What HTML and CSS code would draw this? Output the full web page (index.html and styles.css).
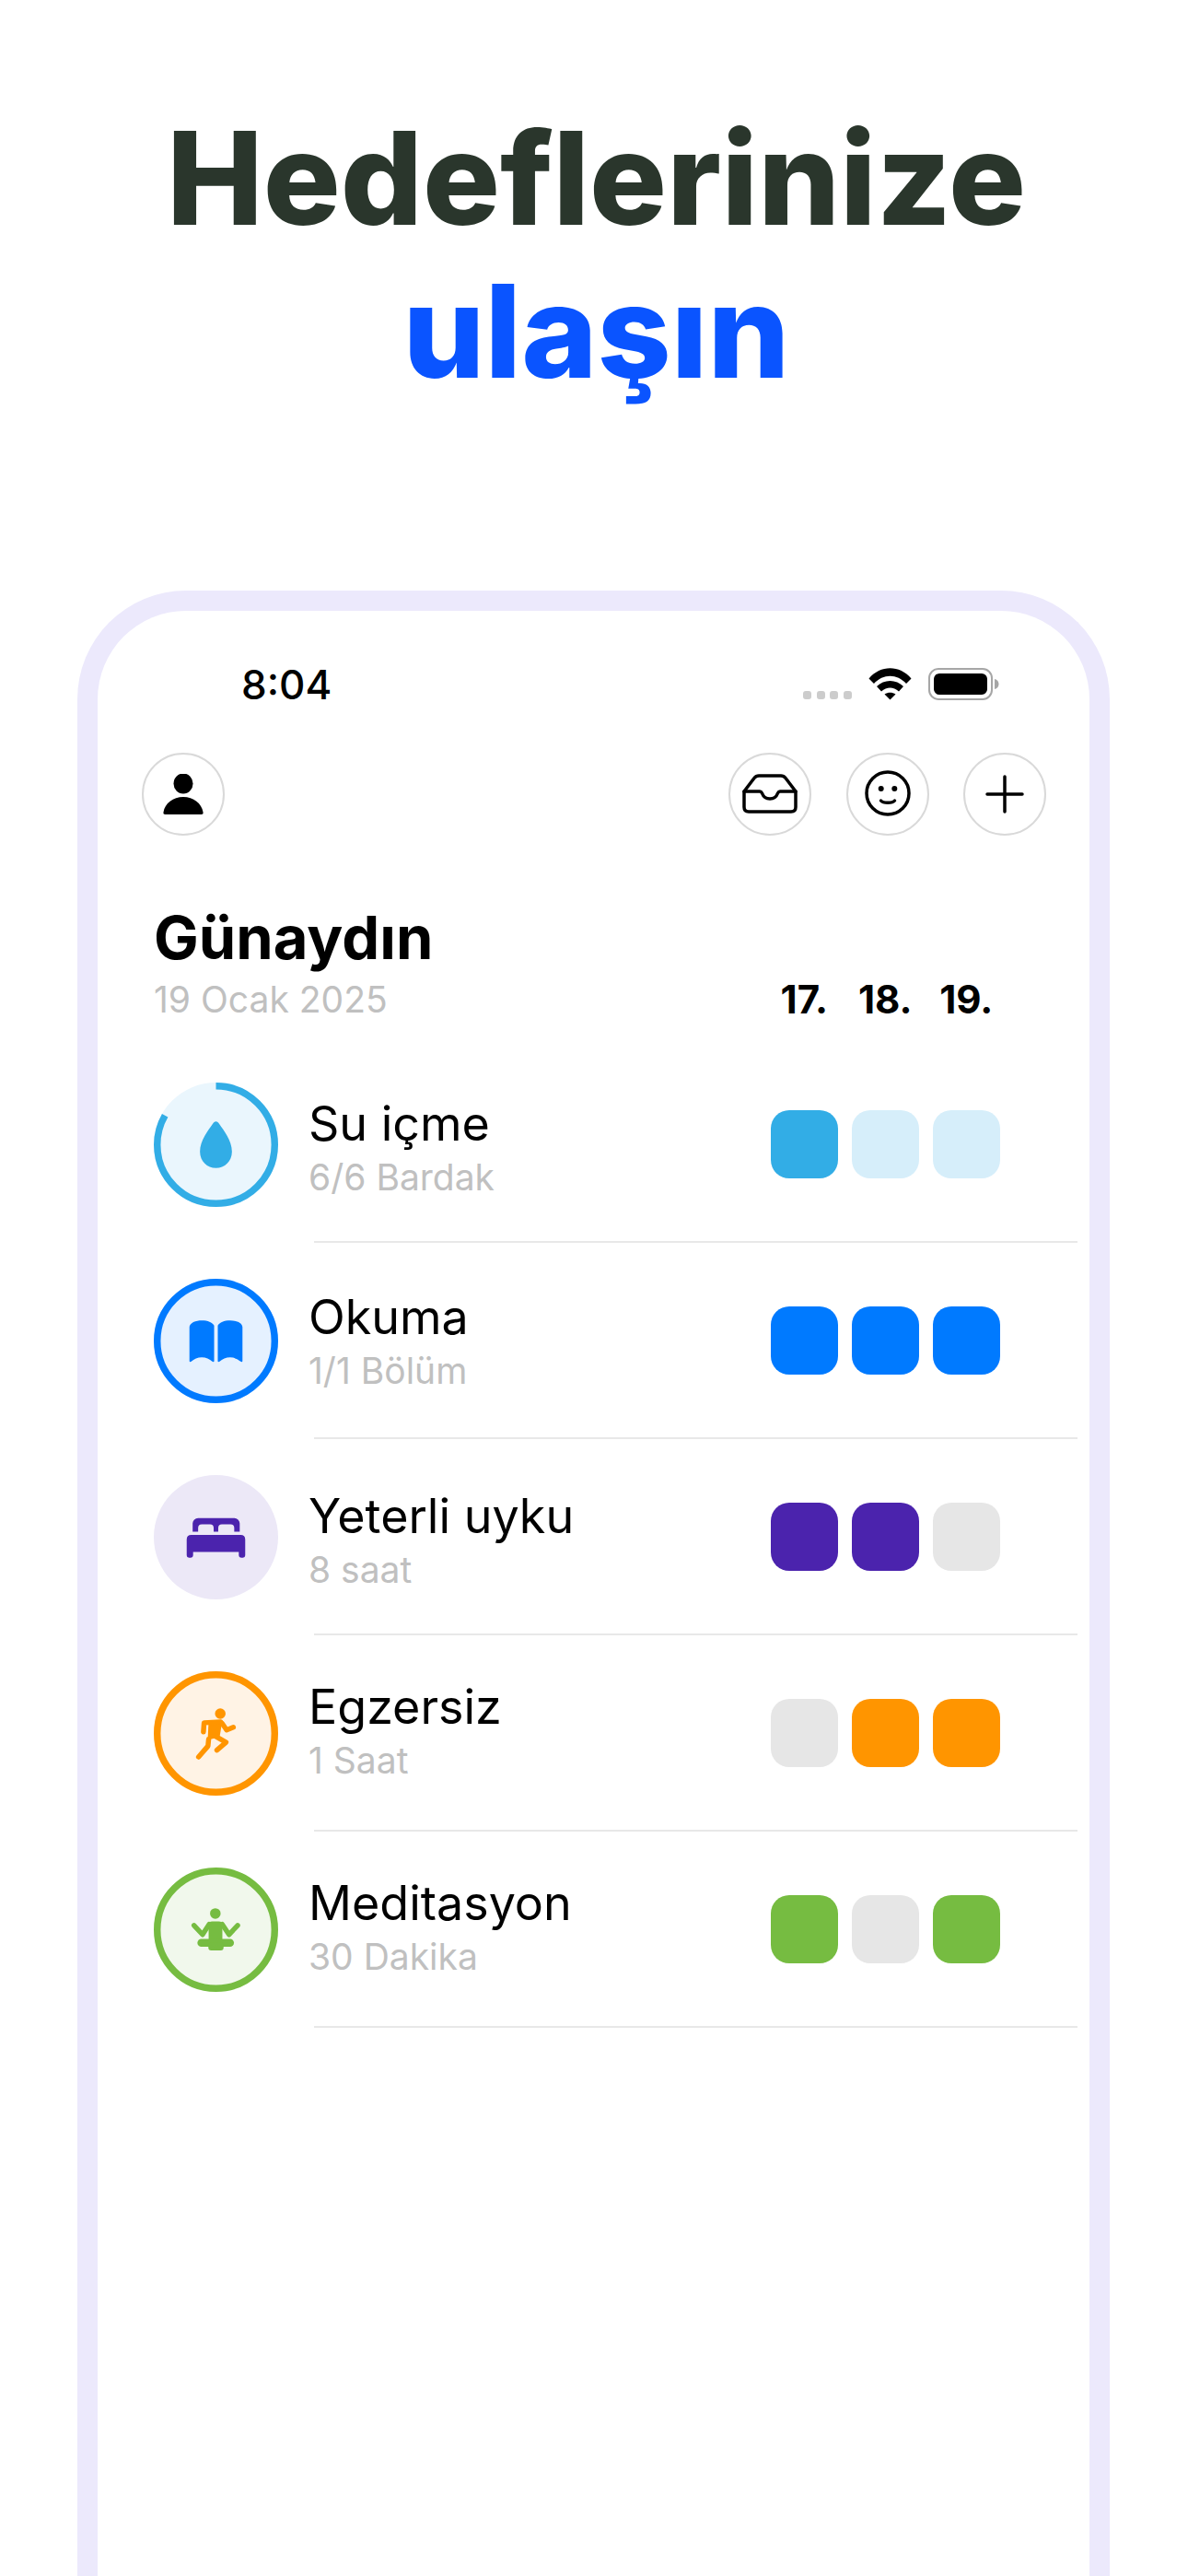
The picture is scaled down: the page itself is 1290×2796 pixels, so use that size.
FILE: index.html
```html
<!DOCTYPE html>
<html lang="tr">
<head>
    <meta charset="UTF-8">
    <meta name="viewport" content="width=device-width, initial-scale=1.0">
    <title>Hedeflerinize ulaşın</title>
    <link rel="stylesheet" href="styles.css">
</head>
<body>
    <div class="page">
        <h1 class="headline">Hedeflerinize<br><span class="headline-blue">ulaşın</span></h1>

        <div class="phone">
            <div class="status">
                <span class="time">8:04</span>
                <div class="status-icons">
                    <div class="dots"><i></i><i></i><i></i><i></i></div>
                    <svg class="wifi" width="47" height="35" viewBox="0 0 47 35">
                        <path d="M0.5 11.5C13 -3.5 34 -3.5 46.5 11.5L41 17C31 6 16 6 6 17Z"/>
                        <path d="M9 20C17 12 30 12 38 20L33 25.5C27 20 20 20 14 25.5Z"/>
                        <path d="M17.5 28.5C21 26 26 26 29.5 28.5L23.5 34.5Z"/>
                    </svg>
                    <svg class="battery" width="77" height="35" viewBox="0 0 77 35">
                        <rect x="1" y="1" width="68" height="33" rx="10" fill="none" stroke="#a6a6a6" stroke-width="2"/>
                        <rect x="6" y="6" width="58" height="23" rx="6" fill="#000"/>
                        <path d="M72 12C75 12.5 76.500 15 76.500 17.500C76.500 20 75 22.500 72 23Z" fill="#a6a6a6"/>
                    </svg>
                </div>
            </div>

            <div class="nav">
                <button class="nav-btn">
                    <svg width="44" height="44" viewBox="0 0 44 44">
                        <ellipse cx="22" cy="10.500" rx="10.500" ry="11"/>
                        <path d="M2.500 44H41.500Q44 44 43.500 41.500C42 32 33 25 22 25C11 25 2 32 0.500 41.500Q0 44 2.500 44Z"/>
                    </svg>
                </button>
                <div class="nav-right">
                    <button class="nav-btn">
                        <svg class="line-icon" width="60" height="44" viewBox="0 0 60 44">
                            <path d="M2 19L13 4.500Q15 2 18 2H42Q45 2 47 4.500L58 19V36Q58 41 53 41H7Q2 41 2 36Z"/>
                            <path d="M2 19H19C20.500 19 21 20 21.500 21C23 25 26 27 30 27C34 27 37 25 38.500 21C39 20 39.500 19 41 19H58"/>
                        </svg>
                    </button>
                    <button class="nav-btn">
                        <svg class="line-icon" width="52" height="52" viewBox="0 0 52 52">
                            <circle cx="26" cy="25" r="23"/>
                            <circle class="eye" cx="18.700" cy="20" r="3"/>
                            <circle class="eye" cx="33.300" cy="20" r="3"/>
                            <path d="M18.500 33C21 36 31 36 33.500 33"/>
                        </svg>
                    </button>
                    <button class="nav-btn">
                        <svg class="line-icon" width="42" height="42" viewBox="0 0 42 42">
                            <path d="M21 2V40M2 21H40"/>
                        </svg>
                    </button>
                </div>
            </div>

            <div class="greeting">
                <div>
                    <div class="hello">Günaydın</div>
                    <div class="date">19 Ocak 2025</div>
                </div>
                <div class="days">
                    <span>17.</span>
                    <span>18.</span>
                    <span>19.</span>
                </div>
            </div>

            <div class="habits">
                <div class="habit water">
                    <svg class="badge" width="135" height="135" viewBox="0 0 136 136">
                        <circle cx="68" cy="68" r="68" fill="#eaf6fd"/>
                        <circle class="ring" cx="68" cy="68" r="64.250" pathLength="100" stroke-dasharray="83.300 100" transform="rotate(-90 68 68)"/>
                        <path class="glyph" d="M68 42.500C69.500 42.500 70.500 43.500 71.500 45C76 51.500 85.500 63 85.500 75.500C85.500 86 77.500 93.500 68 93.500C58.500 93.500 50.500 86 50.500 75.500C50.500 63 60 51.500 64.500 45C65.500 43.500 66.500 42.500 68 42.500Z"/>
                    </svg>
                    <div class="habit-body">
                        <div class="habit-text">
                            <div class="habit-name">Su içme</div>
                            <div class="habit-sub">6/6 Bardak</div>
                        </div>
                        <div class="squares">
                            <span class="square on"></span>
                            <span class="square"></span>
                            <span class="square"></span>
                        </div>
                    </div>
                </div>

                <div class="habit reading">
                    <svg class="badge" width="135" height="135" viewBox="0 0 136 136">
                        <circle cx="68" cy="68" r="68" fill="#e5f1ff"/>
                        <circle class="ring" cx="68" cy="68" r="64.250"/>
                        <path class="glyph" d="M39 53C39 48 46 45.500 52.500 45.500C59 45.500 64 47.500 66 51V90C66 91 65 91 64 90.500C61 88 57 86 52.500 86C48 86 44 88 41 90.500C40 91 39 91 39 90Z"/>
                        <path class="glyph" d="M97 53C97 48 90 45.500 83.500 45.500C77 45.500 72 47.500 70 51V90C70 91 71 91 72 90.500C75 88 79 86 83.500 86C88 86 92 88 95 90.500C96 91 97 91 97 90Z"/>
                    </svg>
                    <div class="habit-body">
                        <div class="habit-text">
                            <div class="habit-name">Okuma</div>
                            <div class="habit-sub">1/1 Bölüm</div>
                        </div>
                        <div class="squares">
                            <span class="square on"></span>
                            <span class="square on"></span>
                            <span class="square on"></span>
                        </div>
                    </div>
                </div>

                <div class="habit sleep">
                    <svg class="badge" width="135" height="135" viewBox="0 0 136 136">
                        <circle cx="68" cy="68" r="68" fill="#ece8f7"/>
                        <path class="glyph" d="M42.500 53A6 6 0 0 1 48.500 47H88A6 6 0 0 1 94 53V62H88V58A4 4 0 0 0 84 54H74.500A4 4 0 0 0 70.500 58V62H65.500V58A4 4 0 0 0 61.500 54H52.500A4 4 0 0 0 48.500 58V62H42.500Z"/>
                        <path class="glyph" d="M41 65.500H95Q100 65.500 100 70.500V88Q100 90.500 97.500 90.500H95.500Q93 90.500 93 88V84H43V88Q43 90.500 40.500 90.500H38.500Q36 90.500 36 88V70.500Q36 65.500 41 65.500Z"/>
                    </svg>
                    <div class="habit-body">
                        <div class="habit-text">
                            <div class="habit-name">Yeterli uyku</div>
                            <div class="habit-sub">8 saat</div>
                        </div>
                        <div class="squares">
                            <span class="square on"></span>
                            <span class="square on"></span>
                            <span class="square"></span>
                        </div>
                    </div>
                </div>

                <div class="habit exercise">
                    <svg class="badge" width="135" height="135" viewBox="0 0 136 136">
                        <circle cx="68" cy="68" r="68" fill="#fff3e5"/>
                        <circle class="ring" cx="68" cy="68" r="64.250"/>
                        <circle class="glyph" cx="72.700" cy="46.300" r="5.800"/>
                        <path class="glyph" d="M60 54H75L72 72L59 75Z"/>
                        <path class="limb" d="M73 55.500L55 56.300L54.300 66.300"/>
                        <path class="limb" d="M74.700 57L79.700 64.300L87 61.300"/>
                        <path class="limb" d="M66.300 70.300L79 77.700L69 86.300"/>
                        <path class="limb" d="M60 74.300L59.300 81.700L49 93.700"/>
                    </svg>
                    <div class="habit-body">
                        <div class="habit-text">
                            <div class="habit-name">Egzersiz</div>
                            <div class="habit-sub">1 Saat</div>
                        </div>
                        <div class="squares">
                            <span class="square"></span>
                            <span class="square on"></span>
                            <span class="square on"></span>
                        </div>
                    </div>
                </div>

                <div class="habit meditation">
                    <svg class="badge" width="135" height="135" viewBox="0 0 136 136">
                        <circle cx="68" cy="68" r="68" fill="#f1f8ec"/>
                        <circle class="ring" cx="68" cy="68" r="64.250"/>
                        <circle class="glyph" cx="67.300" cy="50.300" r="5.800"/>
                        <path class="glyph" d="M64 59H71C74 59 75 61 75 63V82H60V63C60 61 61 59 64 59Z"/>
                        <path class="limb" d="M44 63.300L53.300 73.300L60.700 62"/>
                        <path class="limb" d="M91.700 63.300L82.300 73.300L74.700 62"/>
                        <rect class="glyph" x="47.700" y="78" width="40" height="8.700" rx="4.300"/>
                        <rect class="glyph" x="59.700" y="82" width="16.600" height="8.700" rx="3"/>
                    </svg>
                    <div class="habit-body">
                        <div class="habit-text">
                            <div class="habit-name">Meditasyon</div>
                            <div class="habit-sub">30 Dakika</div>
                        </div>
                        <div class="squares">
                            <span class="square on"></span>
                            <span class="square"></span>
                            <span class="square on"></span>
                        </div>
                    </div>
                </div>
            </div>
        </div>
    </div>
</body>
</html>
```

FILE: styles.css
```css
* {
    box-sizing: border-box;
}

body {
    margin: 0;
    background: #ffffff;
    font-family: Inter, "Liberation Sans", sans-serif;
    color: #000;
}

.page {
    display: flex;
    flex-direction: column;
    width: 1290px;
    height: 2796px;
    overflow: hidden;
}

.headline {
    margin: 0;
    padding: 110px 0 0 5px;
    text-align: center;
    font-size: 140px;
    line-height: 166px;
    font-weight: 800;
    color: #2a362c;
}

.headline-blue {
    color: #0a54ff;
}

.phone {
    flex: 1;
    margin: 199px 85px 0 84px;
    border: 22px solid #ece9fc;
    border-bottom: none;
    border-radius: 118px 118px 0 0;
}

/* status bar */
.status {
    display: flex;
    justify-content: space-between;
    align-items: flex-start;
    padding: 54px 98px 0 156px;
}

.time {
    font-size: 44px;
    line-height: 53px;
    font-weight: 500;
}

.status-icons {
    display: flex;
    align-items: flex-end;
    gap: 18px;
    margin-top: 8px;
}

.dots {
    display: flex;
    gap: 5.6px;
    margin-bottom: 1px;
}

.dots i {
    width: 9px;
    height: 9px;
    border-radius: 3px;
    background: #cccccc;
}

.status svg {
    display: block;
}

/* top buttons */
.nav {
    display: flex;
    justify-content: space-between;
    margin-top: 47px;
    padding: 0 47px 0 48px;
}

.nav-right {
    display: flex;
    gap: 37.500px;
}

.nav-btn {
    display: flex;
    align-items: center;
    justify-content: center;
    width: 90px;
    height: 90px;
    padding: 0;
    background: #fff;
    border: 2.5px solid #d9d9d9;
    border-radius: 50%;
}

.line-icon {
    fill: none;
    stroke: #000;
    stroke-width: 3.5;
    stroke-linecap: round;
    stroke-linejoin: round;
}

.line-icon .eye {
    fill: #000;
    stroke: none;
}

/* greeting */
.greeting {
    display: flex;
    justify-content: space-between;
    align-items: flex-end;
    margin-top: 71px;
    padding: 0 97px 0 61px;
}

.hello {
    font-size: 65px;
    line-height: 80px;
    font-weight: 700;
}

.date {
    font-size: 39px;
    line-height: 53px;
    color: #c0c0c0;
}

.days {
    display: flex;
    gap: 14.500px;
    font-size: 42px;
    line-height: 53px;
    font-weight: 700;
}

.days span {
    width: 73.500px;
    text-align: center;
}

/* habit list */
.habits {
    margin-top: 25px;
}

.habit {
    display: flex;
    align-items: center;
    padding: 0 13px 0 61px;
}

.water {
    --color: #32ade6;
    --off: #d6eefa;
}

.reading {
    --color: #007aff;
}

.sleep {
    --color: #4b23ad;
}

.exercise {
    --color: #ff9500;
}

.meditation {
    --color: #76bc41;
}

.badge {
    flex: none;
}

.ring {
    fill: none;
    stroke: var(--color);
    stroke-width: 7.500;
}

.glyph {
    fill: var(--color);
}

.limb {
    fill: none;
    stroke: var(--color);
    stroke-width: 5.500;
    stroke-linecap: round;
    stroke-linejoin: round;
}

.habit-body {
    display: flex;
    flex: 1;
    justify-content: space-between;
    align-items: center;
    height: 213px;
    margin-left: 39px;
    padding-right: 84px;
    border-bottom: 2px solid #e8e8e8;
}

.habit-text {
    margin-left: -6px;
    padding-top: 12px;
}

.reading .habit-text {
    padding-top: 7px;
}

.exercise .habit-text,
.meditation .habit-text {
    padding-top: 0;
}

.habit-name {
    font-size: 52px;
    line-height: 60px;
}

.habit-sub {
    font-size: 39px;
    line-height: 56px;
    color: #c0c0c0;
}

.squares {
    display: flex;
    gap: 14.500px;
}

.square {
    width: 73.500px;
    height: 74px;
    border-radius: 20px;
    background: var(--off, #e6e6e6);
}

.square.on {
    background: var(--color);
}
```
